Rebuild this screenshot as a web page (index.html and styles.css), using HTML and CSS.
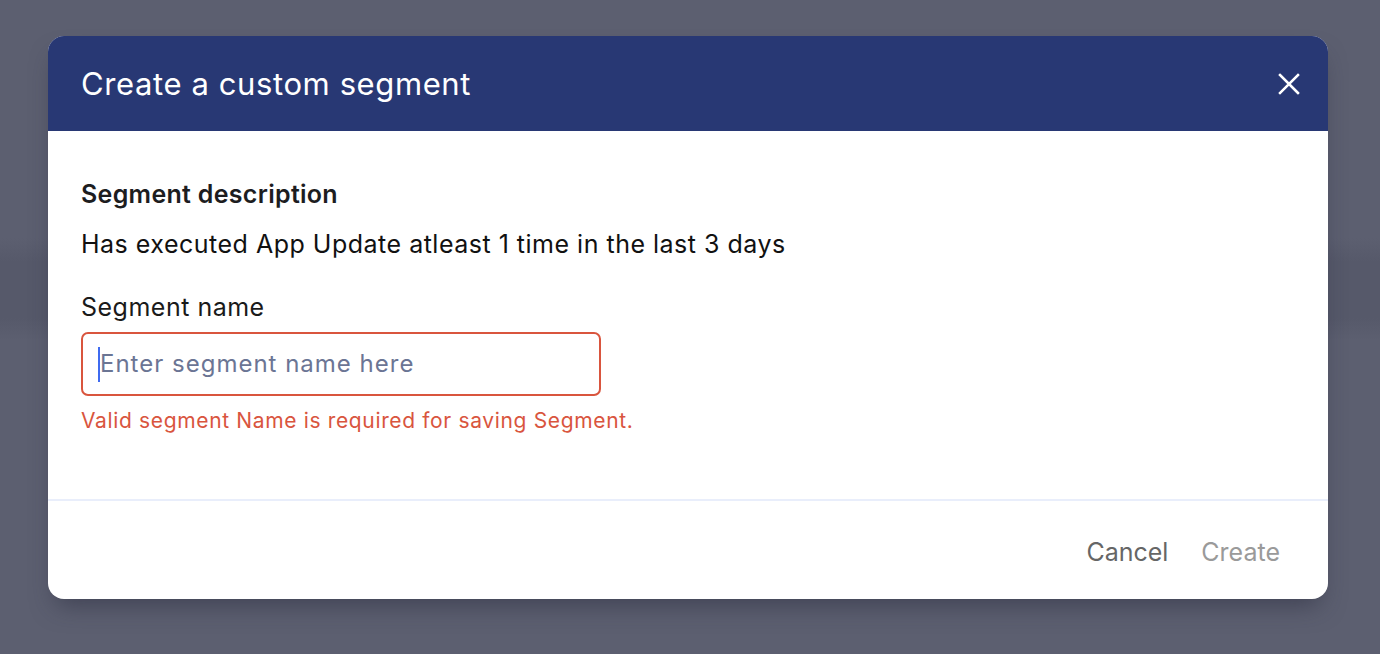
FILE: index.html
```html
<!DOCTYPE html>
<html lang="en">
<head>
<meta charset="utf-8">
<title>Create a custom segment</title>
<link rel="stylesheet" href="styles.css">
</head>
<body>
<div class="backdrop">
  <div class="dialog">
    <div class="dialog-header">
      <h1 class="dialog-title">Create a custom segment</h1>
      <button class="close-btn" aria-label="Close">
        <svg width="22" height="22" viewBox="0 0 22 22"><path d="M2 2 L20 20 M20 2 L2 20" stroke="#fff" stroke-width="2.5" stroke-linecap="square" fill="none"/></svg>
      </button>
    </div>
    <div class="dialog-body">
      <div class="section-title">Segment description</div>
      <div class="description">Has executed App Update atleast 1 time in the last 3 days</div>
      <label class="field-label">Segment name</label>
      <div class="input-box">
        <span class="caret"></span><span class="placeholder">Enter segment name here</span>
      </div>
      <div class="error">Valid segment Name is required for saving Segment.</div>
    </div>
    <div class="dialog-footer">
      <button class="btn btn-cancel">Cancel</button>
      <button class="btn btn-create">Create</button>
    </div>
  </div>
</div>
</body>
</html>
```
FILE: styles.css
```css
* { box-sizing: border-box; }
html, body { margin: 0; padding: 0; }
body {
  width: 1380px;
  height: 654px;
  overflow: hidden;
  font-family: "Inter", "Noto Sans", sans-serif;
  background: linear-gradient(to bottom, #5c5f70 0px, #5c5f70 238px, #56596a 262px, #56596a 318px, #5c5f70 340px, #5c5f70 100%);
}
.backdrop {
  padding: 36px 52px 0 48px;
}
.dialog {
  width: 1280px;
  height: 563px;
  background: #fff;
  border-radius: 16px;
  overflow: hidden;
  display: flex;
  flex-direction: column;
  box-shadow: 0 14px 24px -8px rgba(40, 42, 60, 0.55);
}
.dialog-header {
  height: 95px;
  background: #283874;
  display: flex;
  align-items: center;
  justify-content: space-between;
  padding: 0 28px 0 33px;
}
.dialog-title {
  margin: 0;
  color: #fff;
  font-size: 31px;
  line-height: 36px;
  font-weight: 400;
  letter-spacing: 0.6px;
}
.close-btn {
  background: none;
  border: 0;
  padding: 0;
  width: 22px;
  height: 22px;
  display: flex;
}
.dialog-body {
  flex: 1;
  padding: 48px 33px 0 33px;
  border-bottom: 2px solid #e9eefb;
}
.section-title {
  font-size: 25px;
  font-weight: 600;
  color: #1d1d1f;
  line-height: 30px;
  letter-spacing: 0.3px;
}
.description {
  margin-top: 20px;
  font-size: 25px;
  color: #111;
  line-height: 30px;
  letter-spacing: 0.5px;
}
.field-label {
  display: block;
  margin-top: 33px;
  font-size: 25px;
  color: #1a1a1a;
  line-height: 30px;
  letter-spacing: 0.5px;
}
.input-box {
  margin-top: 10px;
  width: 520px;
  height: 64px;
  border: 2px solid #d9553e;
  border-radius: 7px;
  display: flex;
  align-items: center;
  padding-left: 15px;
}
.caret {
  width: 2px;
  height: 35px;
  background: #3f6bf0;
}
.placeholder {
  font-size: 24px;
  line-height: 30px;
  color: #6b7594;
  letter-spacing: 1px;
}
.error {
  margin-top: 12px;
  font-size: 21px;
  line-height: 26px;
  color: #d9553e;
  letter-spacing: 0.65px;
}
.dialog-footer {
  height: 98px;
  display: flex;
  justify-content: flex-end;
  align-items: center;
  gap: 33px;
  padding: 3px 48px 0 0;
}
.btn {
  background: none;
  border: 0;
  padding: 0;
  font-family: "Inter", "Noto Sans", sans-serif;
  font-size: 25px;
  line-height: 30px;
}
.btn-cancel { color: #666; }
.btn-create { color: #9a9a9a; }
```
